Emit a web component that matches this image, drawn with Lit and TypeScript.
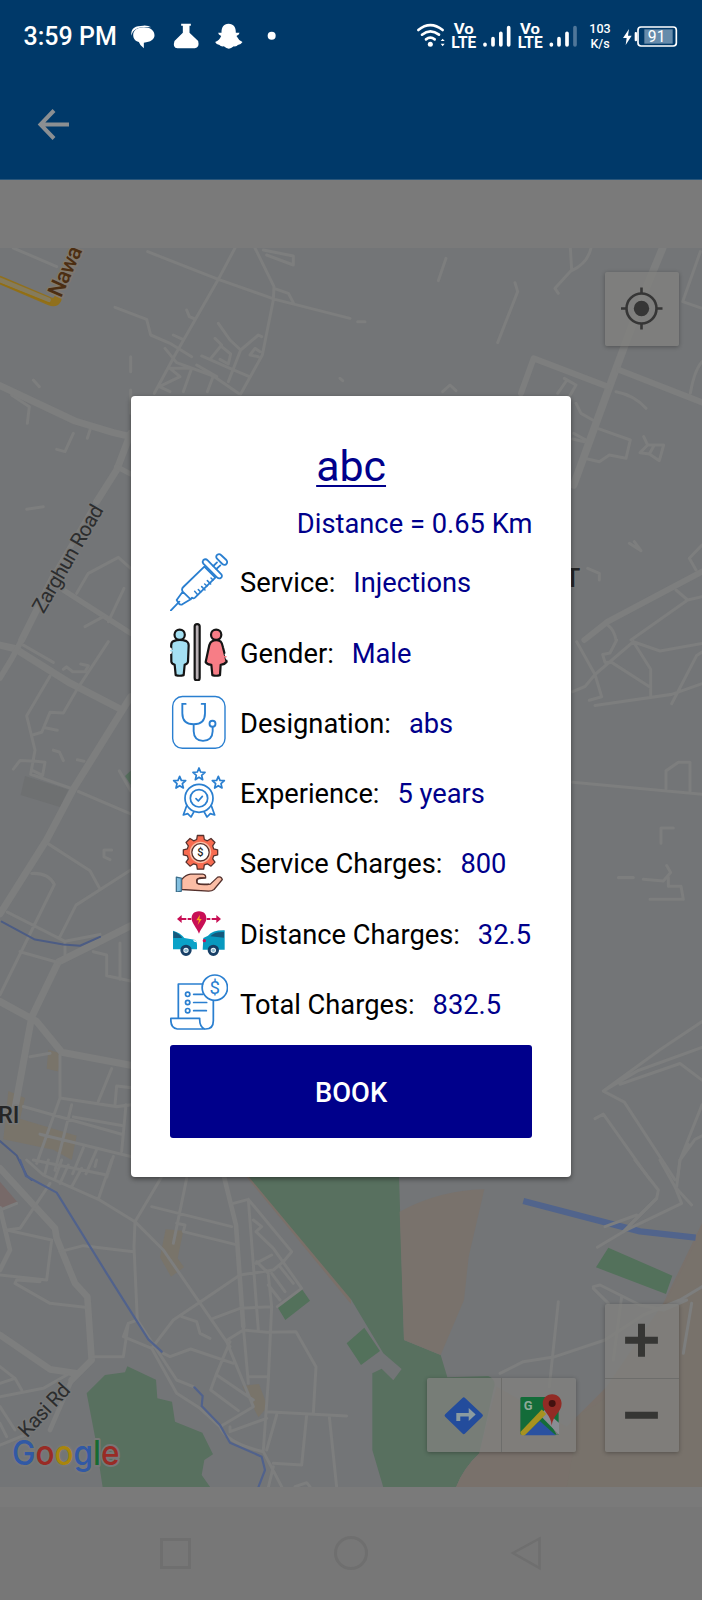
import { LitElement, html, svg, css } from "lit";
import { customElement, property } from "lit/decorators.js";

const BLUE = "#2a7fd0";

const icons: Record<string, unknown> = {
  syringe: svg`<svg viewBox="60 38 175.5 175.5" fill="none" stroke=${BLUE} stroke-width="5.4" stroke-linecap="round" stroke-linejoin="round">
    <path d="M62 211 L88 184 M80 179 L98 154 L122 177 L97 192 Q91 195 86 189 Z M98 154 L96 148 Q96 144 100 140 L163 79 L196 112 L135 172 Q130 176 126 172 L122 177"/>
    <path d="M160 59 Q167 54 173 60 L214 102 Q219 110 210 114 Q205 115 201 111 L160 70 Q156 64 160 59 Z"/>
    <path d="M190 77 L201 66 M199 86 L211 75"/>
    <path d="M202 43 Q208 39 213 44 L229 59 Q235 67 227 73 Q222 75 217 71 L201 55 Q196 48 202 43 Z"/>
    <path stroke-width="4.6" d="M134 153 L143 163 M145 148 L152 155 M155 139 L165 149 M164 131 L171 137 M172 121 L182 131 M183 113 L189 119"/>
  </svg>`,
  gender: svg`<svg viewBox="60 248.7 175.5 175.5" stroke="#151515" stroke-width="6.6" stroke-linejoin="round" stroke-linecap="round">
    <path d="M71 303 Q89 296 109 303 Q116 307 116 316 L114 364 Q114 370 104 374 L101 405 Q89 409 77 405 L74 374 Q64 370 64 364 L63.5 316 Q63.5 306 71 303 Z" fill="#a4e0f2"/>
    <circle cx="89" cy="284" r="15.5" fill="#a4e0f2"/>
    <path d="M61 327 V337" stroke="#fff" stroke-width="9"/><path d="M62 332 h6" stroke="#a4e0f2" stroke-width="4"/>
    <rect x="134" y="252" width="15" height="169" rx="7.5" fill="#b9b1b5"/>
    <path d="M185 304 Q198 297 212 304 Q217 309 219 322 L230 365 Q224 373 212 374 L210 405 Q198 409 187 405 L184 374 Q171 373 167 366 L178 315 Q181 306 185 304 Z" fill="#f77d86"/>
    <circle cx="198.5" cy="284" r="15.5" fill="#f77d86"/>
    <path d="M228 343 L231 355" stroke="#fff" stroke-width="8"/><path d="M224 350 h4" stroke="#f77d86" stroke-width="4"/>
  </svg>`,
  stethoscope: svg`<svg viewBox="60 459.3 175.5 175.5" fill="none" stroke=${BLUE} stroke-width="5.6" stroke-linecap="round">
    <rect x="68" y="470" width="157" height="155" rx="29" stroke-width="4.2"/>
    <path d="M107 492 H97 V520 Q97 553 131 553 Q165 553 165 520 V492 H155 M131 553 V574 Q132 602 159 603 Q187 602 188 574 V561"/>
    <circle cx="187.5" cy="551.5" r="9"/>
  </svg>`,
  award: svg`<svg viewBox="60 -80 175.5 175.5" fill="none" stroke=${BLUE} stroke-width="5.2" stroke-linejoin="round" stroke-linecap="round">
    <path d="M147 -65 L152 -53 L165 -52 L155 -43 L158 -30 L147 -37 L136 -30 L139 -43 L129 -52 L142 -53 Z"/>
    <path d="M89 -40 L94 -28 L107 -27 L97 -18 L100 -5 L89 -12 L78 -5 L81 -18 L71 -27 L84 -28 Z"/>
    <path d="M205 -40 L210 -28 L223 -27 L213 -18 L216 -5 L205 -12 L194 -5 L197 -18 L187 -27 L200 -28 Z"/>
    <circle cx="147" cy="26" r="42"/><circle cx="147" cy="26" r="26"/>
    <path d="M138 27 L145 34 L157 20"/>
    <path d="M110 48 L100 76 L113 72 L123 82 L132 66 M184 48 L194 76 L181 72 L171 82 L162 66"/>
  </svg>`,
  service: svg`<svg viewBox="60 130.5 175.5 175.5" stroke="#54302c" stroke-width="3.8" stroke-linejoin="round">
    <path d="M142 135 H161 L163 147 L172 151 L183 144 L195 156 L188 166 L191 175 L203 178 V193 L191 196 L188 205 L195 215 L183 227 L172 220 L163 223 L161 236 H142 L140 223 L131 220 L120 227 L108 215 L115 205 L112 196 L100 193 V178 L112 175 L115 166 L108 156 L120 144 L131 151 L140 147 Z" fill="#f76b50"/>
    <circle cx="151.5" cy="185.5" r="32" fill="#fbbda5" stroke="none"/>
    <circle cx="151.5" cy="185.5" r="26" fill="#fff"/>
    <text x="151.5" y="197" text-anchor="middle" font-family="Roboto" font-weight="500" font-size="33" fill="#222" stroke="none">$</text>
    <path d="M95 267 Q108 252 122 251 H158 Q168 252 167 262 L148 264 Q138 267 142 279 Q156 285 181 281 L203 260 Q213 256 217 267 L192 297 Q186 302 176 302 L95 297 Z" fill="#fbbda5"/>
    <path d="M167 262 H150 Q136 264 141 277 Q145 282 155 281 H178" fill="none"/>
    <path d="M79 260 L94 263 V302 L79 305 Z" fill="#83c0e0" stroke="#3d6f8c"/>
  </svg>`,
  distance: svg`<svg viewBox="60 341 175.5 175.5">
    <path d="M147 363 C131 363 124 374 125 386 C126 399 140 413 147 430 C154 413 168 399 169 386 C170 374 163 363 147 363Z" fill="#c80f55"/>
    <path d="M150 373 L139 390 H147 L143 404 L155 386 H148 Z" fill="#f9a51b"/>
    <path d="M81 386 L95 374 V383 H109 V389 H95 V398 Z M113 383 H124 V389 H113 Z M213 386 L199 374 V383 H185 V389 H199 V398 Z M170 383 H181 V389 H170 Z" fill="#c80f55"/>
    <path d="M69 421 Q91 427 103 443 L133 448 Q141 450 141 464 V477 H69 Z" fill="#0aa2c8"/>
    <path d="M70 423 Q88 429 97 443 L70 443 Z" fill="#15597c"/>
    <path d="M129 448 Q138 449 141 456 L132 454 Z" fill="#fff"/>
    <path d="M224 420 Q188 419 174 436 L160 443 L158 478 H224 Z" fill="#0899bf"/>
    <path d="M222 425 Q194 423 181 438 L222 442 Z" fill="#15597c"/>
    <circle cx="163" cy="451" r="5" fill="#c80f55"/>
    <circle cx="108" cy="480" r="12.5" fill="#eef6fa" stroke="#173f66" stroke-width="9"/>
    <circle cx="190" cy="480" r="12.5" fill="#eef6fa" stroke="#173f66" stroke-width="9"/>
    <circle cx="108" cy="480" r="5" fill="#8fbbd0"/><circle cx="190" cy="480" r="5" fill="#8fbbd0"/>
  </svg>`,
  total: svg`<svg viewBox="60 552 175.5 175.5" fill="none" stroke=${BLUE} stroke-width="5.2" stroke-linecap="round" stroke-linejoin="round">
    <path d="M85 682 V582 H158 M190 634 V692 Q190 717 167 717 H82 Q62.500 714 62.500 690 V685 H149 Q148 711 164 717"/>
    <circle cx="194.500" cy="593" r="38"/>
    <text x="194.500" y="613" text-anchor="middle" font-family="Roboto" font-size="56" fill=${BLUE} stroke="none">$</text>
    <circle cx="113" cy="613" r="6.500"/><circle cx="113" cy="637.500" r="6.500"/><circle cx="113" cy="662" r="6.500"/>
    <path d="M131 613 H158 M131 637.500 H170 M131 662 H169"/>
  </svg>`,
};

@customElement("detail-row")
class DetailRow extends LitElement {
  @property() icon = "";
  @property() label = "";
  @property() value = "";

  static styles = css`
    :host { display: flex; align-items: center; gap: 11.7px; height: 58.5px; white-space: nowrap; }
    .icon { display: flex; width: 58.5px; height: 58.5px; flex: none; }
    .icon svg { width: 100%; height: 100%; }
    .value { color: #00008b; margin-left: 7px; }
    .text { display: flex; gap: 11px; line-height: 32px; padding-top: 3px; letter-spacing: -0.02px; }
  `;

  render() {
    return html`<span class="icon">${icons[this.icon]}</span>
      <span class="text"><span>${this.label}</span><span class="value">${this.value}</span></span>`;
  }
}

@customElement("city-map")
class CityMap extends LitElement {
  static styles = css`
    :host { display: block; position: relative; height: 1239px; overflow: hidden; background: #737577; }
    .map { display: block; width: 702px; height: 1239px; }
    .ctl { position: absolute; display: flex; background: rgba(129, 129, 127, 0.75); border-radius: 2px; box-shadow: 0 1px 4px rgba(0, 0, 0, 0.3); }
    .locate { top: 24px; right: 23px; width: 74px; height: 73.5px; }
    .links { top: 1129.5px; left: 427px; width: 149px; height: 74px; }
    .zoom { top: 1056px; right: 23px; width: 74px; height: 148px; flex-direction: column; }
    .ctl svg { flex: 1; min-height: 0; min-width: 0; }
    .links svg + svg { border-left: 1px solid #6d6d6b; }
    .zoom svg + svg { border-top: 1px solid #6d6d6b; }
  `;

  render() {
    return html`
      <svg class="map" viewBox="0 248 702 1239" fill="none" stroke="#7d7e7e" stroke-linejoin="round" stroke-linecap="round">
        <!-- land areas, south -->
        <g transform="translate(0 1160) scale(.33333)" stroke="none">
          <path d="M735 45 L1053 432 L1053 410 L765 45 Z" fill="#7b7069"/>
          <path d="M742 45 H1197 L1212 540 L1322 585 L1342 652 L1465 648 Q1492 660 1480 690 L1438 880 Q1390 925 1368 982 H1150 L1117 870 V640 L1145 626 L1180 661 L1205 627 L1150 580 L1053 418 Z" fill="#58705f"/>
          <path d="M1199 155 Q1320 90 1453 88 L1406 290 L1392 420 L1322 585 L1212 540 Z" fill="#79726c"/>
          <path d="M1368 982 Q1390 925 1438 880 L1490 680 L1700 800 L1820 680 L1990 430 L2106 190 V982 Z" fill="#79716b"/>
          <path d="M1740 760 Q1900 690 2000 420 L2106 210 V982 H1700 Z" fill="#78726b"/>
          <path d="M260 700 L315 645 L375 637 L382 619 L468 659 L472 715 L516 725 L525 785 L607 818 L639 883 L613 900 L605 945 L631 982 H308 L285 830 Z" fill="#58705f"/>
          <path d="M832 440 L905 386 L930 422 L856 480 Z M1040 550 L1093 503 L1140 573 L1083 615 Z M1788 322 L1825 263 L2017 347 L1998 402 Z" fill="#53715b"/>
          <path d="M0 65 L55 130 L0 150 Z" fill="#776968"/>
          <path d="M497 208 L550 212 L533 295 L552 322 L513 350 L480 292 Z M727 678 L777 672 L803 740 L775 772 Z" fill="#79746a"/>
        </g>
        <g transform="translate(0 640) scale(.33333 .34435)" stroke="none">
          <path d="M375 395 L392 380 V420 Z" fill="#58705f"/>
          <path d="M75 395 L205 435 L180 485 L62 450 Z" fill="#6e7071"/>
          <path d="M145 1190 L182 1200 L175 1253 L140 1245 Z M25 1310 L75 1330 L60 1390 L230 1440 L215 1510 L160 1480 L10 1450 Z" fill="#79746a"/>
        </g>

        <!-- streets, north west -->
        <g transform="translate(0 240) scale(.33333)" stroke-width="9">
          <path d="M40 24 L170 80 M443 35 L655 118 L825 178 L1050 235 M705 24 L655 118 L525 345 L463 460 M765 24 L822 140 L820 180 L787 345 L722 462 M822 145 L865 160 L880 188 M790 30 L880 48 L880 75 L800 45 M345 202 L440 238 L452 285 L510 310 L575 350 M495 325 L530 368 L640 408 L715 460 M520 285 L548 298 M560 210 L568 230 L585 237 M655 250 L690 300 L722 330 L775 285 L785 290 M605 348 L690 385 L748 410 M645 295 L665 315 L630 358 M665 320 L692 342 L685 372 L660 358 M722 330 L685 425 M510 385 H575 L550 455 M510 385 L540 410 L478 440 L510 455 M640 408 L622 455 M590 375 L650 410 M775 350 L750 345 L765 325 L780 335 M392 350 V395 M392 450 V520 M100 420 L118 440 M1020 415 L1028 422 M80 808 L130 800 M220 580 L195 635 L170 628 M270 570 L262 595 M35 465 L88 500 L82 550"/>
          <path d="M0 437 L225 543 L340 578 L392 590 M392 580 L350 690 L290 785 M165 1000 L65 1200" stroke-width="21"/>
          <path d="M350 680 L392 702 M290 785 L165 1000 M190 1050 L392 1180" stroke-width="16"/>
          <path d="M230 1060 L265 1000 L355 952 L392 985 M255 1160 L310 1130 M372 1045 L325 1145" />
          <path d="M0 120 L150 184 Q165 190 172 178" stroke="#90701d" stroke-width="25"/>
          <path d="M0 120 L145 180" stroke="#857b5c" stroke-width="15"/>
          <path d="M0 130 L150 190" stroke="#936f11" stroke-width="4"/>
        </g>
        <!-- streets, north east -->
        <g transform="translate(351 240) scale(.33333)" stroke-width="9">
          <path d="M285 55 L262 122 M492 128 L500 155 L440 308 M658 24 L662 90 L612 145 L622 160 M720 24 Q710 70 662 92 M1048 35 L995 185 L1053 205 M20 245 H42 M275 455 L297 435 L315 452 M640 415 L675 435 L655 470 M620 460 L648 420 M795 455 Q850 465 885 505 M675 490 L690 520 L725 540 M668 580 L705 600 M665 597 L700 605 M740 565 L838 600 L825 655 L775 645 L745 665 L700 655 M878 590 L890 615 L938 615 L925 662 L895 642 L867 638 L890 615 M895 642 L910 615 M1053 365 Q1030 390 1018 460 M835 910 L870 932 L850 905 M710 985 L745 1000 V1020 M1053 915 L1015 955 L1035 990 M975 1050 L1010 1080 L1053 1070 M1010 1080 L840 1200 M770 1155 Q790 1170 795 1200"/>
          <path d="M935 24 L885 145 L790 400 L735 550 L668 735" stroke-width="23"/>
          <path d="M510 460 L548 355 L770 440 M805 390 L1053 487 M700 1200 L770 1145 L1053 995" stroke-width="18"/>
        </g>
        <!-- streets, west -->
        <g transform="translate(0 640) scale(.33333 .34435)" stroke-width="9">
          <path d="M0 15 L45 25 L210 125 L360 200 M392 165 L225 425 L140 580 L0 795 M392 830 L290 880 L175 935 L95 1095 L45 1360 M0 1050 L110 1108 L185 1197 L392 1235" stroke-width="21"/>
          <path d="M65 0 L35 55 L0 110" stroke-width="17"/>
          <path d="M70 15 L160 65 M325 5 L230 145 L190 212 L150 210 L125 268 L100 275 M150 105 L80 220 L105 320 L92 390 L210 430 M135 255 L172 262 M190 85 L200 78 L218 92 H255 L265 75 L242 70 M40 375 L60 350 L108 352 L135 355 L128 393 L100 380 M160 320 L178 325 L190 350 M232 348 L252 352 M235 440 L392 505 M145 592 L270 670 L297 718 M358 380 L392 438 M335 610 H312 V630 L330 638 M392 668 L228 770 L178 865 M95 678 Q145 675 163 710 L0 1030 M22 790 L195 875 L300 855 M195 875 V915 M60 905 L180 938 M280 905 L320 915 V975 L392 990 M360 880 V985 M90 1210 L150 1200 M180 1205 V1330 L350 1355 L392 1350 M335 1245 L295 1340 M70 1355 L365 1435 M345 1350 L350 1295 L392 1300 M220 1385 L365 1410 M378 1350 L365 1485 M180 1330 L110 1520 M215 1350 L165 1540 M120 1435 L392 1500 M250 1475 L218 1550 M290 1480 L258 1550 M340 1500 L320 1560"/>
          <path d="M5 818 L105 870 L190 884 L240 888 L300 862 M0 1455 L50 1497 L80 1555 L95 1568" stroke="#4c5c84" stroke-width="6"/>
        </g>
        <!-- streets, east -->
        <g transform="translate(560 640) scale(.33333 .34435)" stroke-width="9">
          <path d="M50 5 L105 100 L125 165 L88 175 M38 150 L75 135 L105 100 L220 5 M220 5 L300 32 L426 10 M220 5 L272 85 V165 M155 65 L272 138 M170 0 L150 38 L128 42 L135 65 L155 65 M105 190 L335 158 L426 127 M426 35 L410 45 L335 185 M38 413 L426 448 M318 432 V380 L355 355 H390 V440 M340 546 H303 V590 M320 655 L332 675 L310 700 L250 695 M325 690 V715 H363 L370 753 H270 M175 690 H220 M426 1108 L300 1190 L130 1310 M426 1183 L235 1250 L130 1310 M180 1290 L360 1230 L426 1278 M130 1310 L193 1342 L345 1568 M105 1390 L130 1377 L270 1568 M426 1350 L360 1510 L352 1568 M360 1510 L405 1450 L426 1440 M370 1490 L385 1465"/>
        </g>
        <!-- streets, south -->
        <g transform="translate(0 1160) scale(.33333)" stroke-width="9">
          <path d="M0 25 L165 205 L170 235 L225 370 L262 410 L275 600 L215 660 M0 525 L150 628 L230 640" stroke-width="20"/>
          <path d="M0 145 L30 270 L0 330 M672 50 L708 195 L730 500 M215 660 L150 810" stroke-width="14"/>
          <path d="M80 0 L130 45 L295 118 L405 185 M150 70 L60 205 L20 210 M50 130 L0 150 M335 0 L295 118 M145 0 L135 40 M185 0 L165 55 M100 0 L320 45 M205 15 L180 70 M245 25 L215 80 M290 0 L285 20 M20 210 L155 240 L140 360 L0 345 M45 370 L50 360 L120 365 M45 370 L150 430 L255 442 M180 275 L250 257 L400 275 M405 185 L402 260 L412 480 M405 185 L485 50 M405 185 L490 270 L690 560 M455 140 L695 200 M560 55 L520 250 M530 190 L555 195 L550 215 L705 253 M700 130 L745 118 L775 510 M745 118 L875 275 L850 305 M760 180 L785 200 L768 215 L820 265 L905 385 L832 440 M768 310 L815 285 M850 305 L820 330 L720 345 L595 430 L520 480 L455 565 L370 530 L385 490 L412 480 L530 660 L580 680 M640 475 L720 445 L815 440 L805 345 M815 440 L805 660 L790 870 M815 340 L855 395 M840 320 L880 370 M805 375 L840 420 M770 305 L805 340 M545 470 L590 485 L600 520 L630 535 M455 565 L530 700 L600 745 L660 800 M490 580 L510 590 L572 567 L700 610 M730 500 L745 670 M682 540 L730 510 L800 517 L888 515 L948 620 L940 760 M690 545 L650 640 L632 690 L715 752 M682 550 L760 740 M650 645 L760 720 M745 650 H800 M660 800 L760 740 M690 800 L690 815 L800 775 M800 755 L1040 768 M830 765 L800 870 M920 765 L905 915 L820 910 M988 770 L1010 982 M660 800 Q680 850 790 875 L845 980 M805 982 L820 920 M885 980 L920 968 L930 980 M275 590 H370 L385 490 M0 710 L130 685 L200 645 M0 620 L45 655 L65 690 M45 655 L0 670 M0 740 L45 810 M0 855 L75 825 M0 790 L20 830"/>
          <path d="M1500 640 L1570 605 L1665 590 L1815 540 L1930 465 L2040 420 L2106 380 M1675 425 L1648 680 M1780 380 L1800 375 L1920 435 L1990 450 L2060 420 M1780 385 L1825 430 M1865 410 L1840 600 M2075 430 L2050 580 M1905 0 L1975 90 L1970 115 L1870 215 M1980 0 L2025 80 L2075 135 M2040 0 L2030 80"/>
          <path d="M60 0 L78 48 L170 98 L190 130 L320 340 L445 538 L485 575 M583 682 L608 708 L605 738 L660 795 L690 848 L785 890 L795 930 L775 982" stroke="#51628c" stroke-width="6.5"/>
          <path d="M1570 123 L1920 214 L2087 233" stroke="#51648c" stroke-width="19" stroke-linecap="butt"/>
          <path d="M2025 80 L2045 130 L1875 212 L1792 262 M1910 165 L1815 200 M1970 115 L1870 215"/>
        </g>

        <g font-family="Roboto" stroke="#777878" stroke-width="3" paint-order="stroke" fill="#2c2d2e">
          <text transform="translate(61 298.5) rotate(-66)" font-size="22" font-weight="500" fill="#4c2e12" textLength="53" stroke="#80786c">Nawa</text>
          <text transform="translate(43.5 614.5) rotate(-60)" font-size="20.5" textLength="121">Zarghun Road</text>
          <text transform="translate(27 1438.500) rotate(-47)" font-size="20.500" textLength="65">Kasi Rd</text>
          <g font-weight="500" fill="#242526">
            <text x="-2" y="1122.500" font-size="23.500">RI</text>
            <text x="565" y="586.500" font-size="25">T</text>
          </g>
          <text x="12" y="1464.500" font-family="Inter" font-weight="500" font-size="34.500" textLength="107.500" lengthAdjust="spacingAndGlyphs" stroke-width="4"><tspan fill="#3159a5">G</tspan><tspan fill="#992b25">o</tspan><tspan fill="#a8850d">o</tspan><tspan fill="#3159a5">g</tspan><tspan fill="#176b31">l</tspan><tspan fill="#992b25">e</tspan></text>
        </g>
      </svg>
      <div class="ctl locate">
        <svg viewBox="0 0 74 73.5" fill="none" stroke="#363636" stroke-width="2.6">
          <circle cx="36.5" cy="36.5" r="15"/><circle cx="36.5" cy="36.5" r="7.700" fill="#363636" stroke="none"/>
          <path d="M36.500 15.500 V22 M36.500 51 V57.500 M16 36.500 H22 M51 36.500 H57.500"/>
        </svg>
      </div>
      <div class="ctl links">
        <svg viewBox="0 0 74.5 74">
          <path d="M35.7 19.8 Q37 18.500 38.300 19.800 L55.700 36.200 Q57 37.500 55.700 38.800 L38.300 55.700 Q37 57 35.700 55.700 L18.300 38.800 Q17 37.500 18.300 36.200 Z" fill="#234c9c"/>
          <path d="M29.500 43 V35 H42 V30 L49 36.500 L42 43 V38.500 H33.500 V43 Z" fill="#8b9ba0"/>
        </svg>
        <svg viewBox="0 0 74.5 74">
          <path d="M20 19 H57 V57 H20 Q18.500 57 18.500 55.500 V20.500 Q18.500 19 20 19 Z" fill="#136c39"/>
          <path d="M42 33 L57.500 48 V55 Q57.500 57 55 57 Z" fill="#777"/>
          <path d="M38 37 L57.500 57 V45 L43 32 Z" fill="#8a8d94"/>
          <path d="M38 43 L54 57.500 H22 Z" fill="#2a51a0"/>
          <path d="M40 31.500 L44.500 36 L23 57.500 H20 Q18.500 57 18.500 54 Z" fill="#a79220"/>
          <text x="22" y="32" font-family="Roboto" font-weight="700" font-size="13" fill="#8fa999">G</text>
          <path d="M50.500 16 C44.500 16 41 20.500 41 25.500 C41 34 49.500 37 50 47.500 C51.500 37 60 34 60 25.500 C60 20.500 56.500 16 50.500 16 Z" fill="#922b25"/>
          <circle cx="50.500" cy="25.500" r="3.500" fill="#43110f"/>
        </svg>
      </div>
      <div class="ctl zoom">
        <svg viewBox="0 0 74 74"><path d="M33 20 h7 v13 h13 v7 h-13 v13 h-7 v-13 h-13 v-7 h13 z" fill="#363634"/></svg>
        <svg viewBox="0 0 74 74"><path d="M20 33 h33 v7 h-33 z" fill="#363634"/></svg>
      </div>`;
  }
}

@customElement("app-root")
class AppRoot extends LitElement {
  static styles = css`
    :host { display: block; position: relative; width: 702px; height: 1600px; overflow: hidden; background: #7a7a7a; font-family: Roboto, sans-serif; color: #000; }
    .header { height: 179.5px; background: #003969; border-bottom: 1px solid #2a567a; box-sizing: border-box; }
    .status { display: flex; align-items: center; height: 71px; padding: 0 24px 0 23.5px; color: #fff; }
    .time { font-size: 25px; font-weight: 500; width: 107px; line-height: 29px; padding-top: 2px; white-space: nowrap; }
    .notes { width: 150px; height: 30px; }
    .signals { width: 163px; height: 40px; margin-left: auto; }
    .rate { display: flex; flex-direction: column; align-items: center; width: 22px; margin-left: 10px; padding-top: 1px; font-size: 12.5px; font-weight: 500; line-height: 15px; }
    .battery { width: 56px; height: 30px; margin-left: 11px; }
    .bar { display: flex; align-items: center; height: 106px; padding-left: 37px; }
    .bar svg { width: 33px; height: 33px; }
    .gap { height: 68.5px; }
    .nav { display: flex; align-items: center; justify-content: space-between; margin-top: 20px; height: 93px; padding: 0 158px; background: #777; }
    .nav svg { width: 36px; height: 36px; }
    .dialog { position: absolute; left: 130.8px; top: 396px; width: 440.6px; height: 781px; box-sizing: border-box; padding: 39px; background: #fff; border-radius: 4px; box-shadow: 0 2px 5px rgba(0, 0, 0, 0.45); font-size: 27.3px; }
    .rows { display: flex; flex-direction: column; gap: 11.75px; margin-top: 11.5px; }
    .name { line-height: 62px; height: 73px; font-size: 42.9px; text-align: center; color: #00008b; text-decoration: underline; text-decoration-thickness: 2px; text-underline-offset: 4px; }
    .distance { color: #00008b; text-align: right; line-height: 33px; white-space: nowrap; }
    .book { display: flex; align-items: center; justify-content: center; width: 100%; height: 93px; margin-top: 12px; padding: 4px 0 0; border: 0; border-radius: 3px; background: #00008b; color: #fff; font: 500 27.3px Roboto, sans-serif; }
  `;

  private rows = [
    ["syringe", "Service:", "Injections"],
    ["gender", "Gender:", "Male"],
    ["stethoscope", "Designation:", "abs"],
    ["award", "Experience:", "5 years"],
    ["service", "Service Charges:", "800"],
    ["distance", "Distance Charges:", "32.5"],
    ["total", "Total Charges:", "832.5"],
  ];

  render() {
    return html`
      <div class="header">
        <div class="status">
          <span class="time">3:59 PM</span>
          <svg class="notes" viewBox="393.500 61 450 90" fill="#fff">
            <path d="M395 105 Q390 75 430 75 Q445 74 454 80 Q400 74 395 105Z"/>
            <path d="M432 80 C452 80 464 90 464 104 C464 116 452 125 432 126 V143 Q420 134 417 124 C405 121 400 112 400 103 C400 89 413 80 432 80Z"/>
            <path d="M544 69 H573 V75 H569 V96 L595 121 Q600 141 585 143 H533 Q517 142 524 121 L549 96 V75 H544 Z"/>
            <path d="M686 69 C702 69 708 80 708 96 L719 96 Q719 102 710 106 Q716 119 728 124 Q724 131 714 133 Q711 138 702 137 Q693 144 687 144 Q680 144 672 137 Q662 138 659 133 Q649 131 646 124 Q659 119 664 106 Q655 102 655 96 L665 96 C665 80 671 69 686 69Z"/>
            <circle cx="815.500" cy="105" r="12"/>
          </svg>
          <svg class="signals" viewBox="195 46 489 120" fill="none" stroke="#fff" stroke-width="8" stroke-linecap="round">
            <path d="M202 88 Q238 59 275 88 M213 102 Q238 82 264 102 M225 116 Q238 106 251 116"/>
            <circle cx="238" cy="131" r="7.500" fill="#fff" stroke="none"/>
            <path d="M275 114 L281 121 H269 Z M275 137 L281 129 H269 Z" fill="#fff" stroke="none"/>
            <g fill="#fff" stroke="none" font-family="Roboto" font-weight="700">
              <text x="308" y="99" font-size="46" textLength="60" lengthAdjust="spacingAndGlyphs">Vo</text>
              <text x="301" y="143" font-size="47" textLength="75" lengthAdjust="spacingAndGlyphs">LTE</text>
              <text x="507" y="99" font-size="46" textLength="60" lengthAdjust="spacingAndGlyphs">Vo</text>
              <text x="500" y="143" font-size="47" textLength="75" lengthAdjust="spacingAndGlyphs">LTE</text>
            </g>
            <g stroke-width="11">
              <path d="M402 131 V133 M426 114 V133 M449.500 98 V133 M473 81 V133 M601 131 V133 M624 114 V133 M648 98 V133"/>
              <path d="M672 81 V133" stroke="#4f7699"/>
            </g>
          </svg>
          <span class="rate"><span>103</span><span>K/s</span></span>
          <svg class="battery" viewBox="815 59 168 90">
            <path d="M836 83 L818 110 H829 L826 131 L844 103 H833 Z" fill="#fff"/>
            <rect x="853" y="92" width="7" height="28" rx="3" fill="#fff"/>
            <rect x="863" y="77" width="115" height="57" rx="9" fill="none" stroke="#fff" stroke-width="5"/>
            <rect x="882" y="84" width="85" height="43" fill="#668bab"/>
            <text x="919" y="122" text-anchor="middle" font-family="Roboto" font-size="47" fill="#fff">91</text>
          </svg>
        </div>
        <div class="bar">
          <svg viewBox="0 0 33 33" fill="none" stroke="#8b8f92" stroke-width="4"><path d="M32 16.5 H4 M17 2.5 L3.5 16.5 L17 30.5"/></svg>
        </div>
      </div>
      <div class="gap"></div>
      <city-map></city-map>
      <div class="nav">
        <svg viewBox="0 0 36 36" fill="none" stroke="#6f6f6f" stroke-width="3"><rect x="3.5" y="3.5" width="28" height="28"/></svg>
        <svg viewBox="0 0 36 36" fill="none" stroke="#6f6f6f" stroke-width="3"><circle cx="18" cy="17" r="15.5"/></svg>
        <svg viewBox="0 0 36 36" fill="none" stroke="#6f6f6f" stroke-width="2.5"><path d="M31.5 2.5 V32 L5 17 Z"/></svg>
      </div>
      <div class="dialog">
        <div class="name">abc</div>
        <div class="distance">Distance = 0.65 Km</div>
        <div class="rows">
          ${this.rows.map(([i, l, v]) => html`<detail-row icon=${i} label=${l} value=${v}></detail-row>`)}
        </div>
        <button class="book">BOOK</button>
      </div>`;
  }
}
